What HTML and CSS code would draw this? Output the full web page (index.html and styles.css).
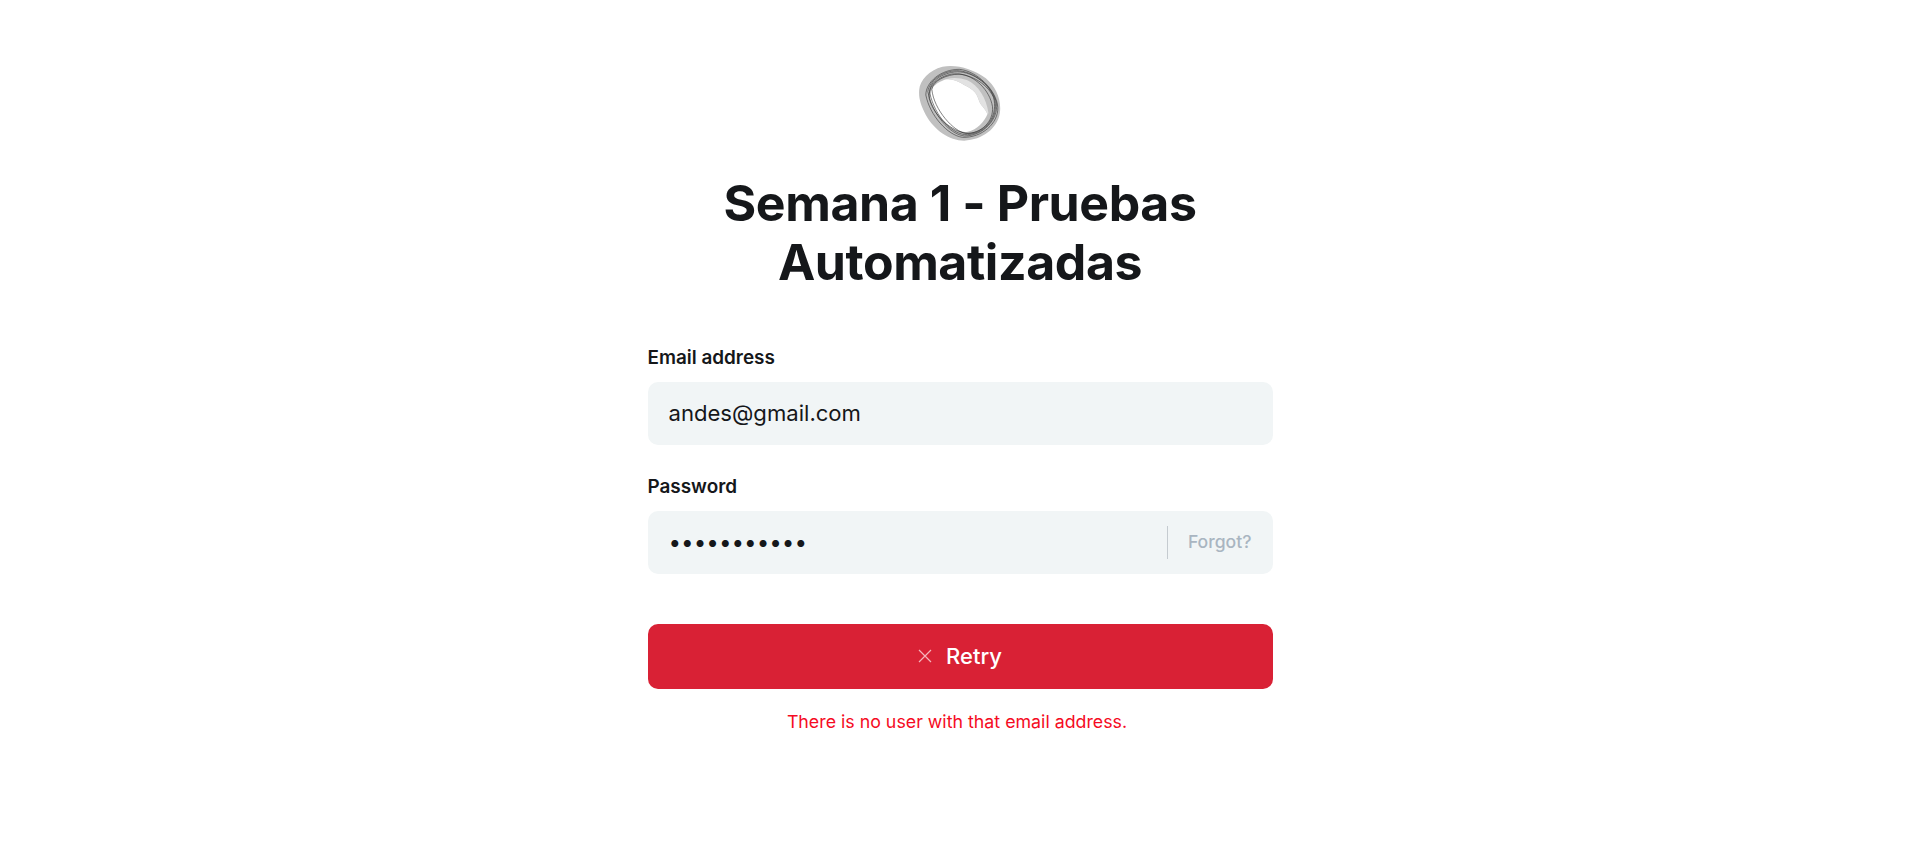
FILE: index.html
```html
<!DOCTYPE html>
<html lang="en">
<head>
<meta charset="utf-8">
<title>Semana 1 - Pruebas Automatizadas</title>
<link rel="stylesheet" href="styles.css">
</head>
<body>
<main class="page">
  <svg class="logo" viewBox="60 45 245 231" width="82" height="77" aria-hidden="true">
    <path class="logo-fill" fill-rule="evenodd" d="M60 120C62 90 90 60 130 50C170 42 220 55 260 85C290 110 308 150 302 190C295 235 250 270 195 272C150 272 105 240 80 195C65 165 58 145 60 120ZM130 92C115 98 100 108 95 125C88 150 100 175 120 200C140 225 175 250 205 245C235 240 255 215 265 192C258 175 242 165 238 148C232 125 215 115 195 105C175 92 150 82 130 92Z"/>
    <path class="logo-light" d="M122 95C145 82 175 80 203 90C238 105 262 145 268 190L265 192C258 175 242 165 238 148C232 125 215 115 195 105C175 92 150 82 130 92Z"/>
    <g class="logo-lines">
      <path d="M92 130C88 98 122 72 165 66C215 60 272 100 287 150C298 200 262 250 205 254C160 256 108 200 92 130Z"/>
      <path d="M86 125C90 92 128 64 172 62C222 62 282 108 292 160C298 208 252 258 196 258C152 254 100 192 86 125Z"/>
      <path d="M98 118C102 92 140 74 180 72C226 76 272 120 280 170C284 215 245 252 200 250C165 246 104 180 98 118Z"/>
      <path d="M80 135C80 96 125 58 180 58C232 62 292 120 296 172C298 220 248 264 190 262C145 256 92 196 80 135Z"/>
      <path d="M90 145C86 105 118 80 158 72C205 68 262 96 283 142C296 190 270 240 215 250C170 254 106 205 90 145Z"/>
    </g>
  </svg>
  <h1 class="title">Semana 1 - Pruebas Automatizadas</h1>
  <form class="form">
    <div class="field">
      <label class="label" for="email">Email address</label>
      <div class="control">
        <input class="input" id="email" type="email" value="andes@gmail.com">
      </div>
    </div>
    <div class="field">
      <label class="label" for="password">Password</label>
      <div class="control">
        <input class="input input-password" id="password" type="password" value="12345678901">
        <a class="forgot" href="#">Forgot?</a>
      </div>
    </div>
    <button class="retry" type="button">
      <svg class="retry-icon" viewBox="0 0 14 14" width="14" height="14" aria-hidden="true"><path d="M1 1L13 13M13 1L1 13"/></svg>
      <span>Retry</span>
    </button>
    <p class="error">There is no user with that email address.</p>
  </form>
</main>
</body>
</html>
```

FILE: styles.css
```css
* {
  box-sizing: border-box;
}

html, body {
  margin: 0;
  background: #fff;
}

body {
  font-family: Inter, "Noto Sans", sans-serif;
  color: #15171a;
}

.page {
  display: flex;
  flex-direction: column;
  align-items: center;
  padding-top: 65px;
}

.logo {
  display: block;
  margin-bottom: 32px;
}

.logo-fill {
  fill: #c0c0c0;
}

.logo-light {
  fill: #e2e2e2;
}

.logo-lines path {
  fill: none;
  stroke: #333;
  stroke-width: 3;
  stroke-opacity: 0.6;
}

.title {
  width: 520px;
  margin: 0 0 54px;
  font-size: 50px;
  line-height: 59px;
  font-weight: 700;
  letter-spacing: -0.42px;
  text-align: center;
}

.form {
  width: 625px;
  display: flex;
  flex-direction: column;
}

.field {
  display: flex;
  flex-direction: column;
  gap: 12px;
  margin-bottom: 30px;
}

.label {
  font-size: 18.9px;
  line-height: 24px;
  font-weight: 600;
}

.control {
  display: flex;
  align-items: center;
  height: 63px;
  border-radius: 10px;
  background: #f1f5f6;
}

.input {
  flex: 1;
  min-width: 0;
  height: 100%;
  padding: 0 21px 2px;
  border: 0;
  outline: 0;
  background: transparent;
  font-family: inherit;
  font-size: 22.1px;
  color: #15171a;
}

.input-password {
  font-size: 22.4px;
}

.forgot {
  height: 33px;
  padding: 0 21px 2px 20px;
  border-left: 1px solid #c5cbd0;
  font-size: 17.6px;
  line-height: 31px;
  font-weight: 500;
  color: #a9b5c1;
  text-decoration: none;
}

.retry {
  display: flex;
  align-items: center;
  justify-content: center;
  gap: 14px;
  height: 65px;
  margin-top: 20px;
  padding: 0 0 2px;
  border: 0;
  border-radius: 10px;
  background: #d92135;
  font-family: inherit;
  font-size: 22px;
  font-weight: 500;
  color: #fff;
}

.retry-icon path {
  fill: none;
  stroke: #f5b5bc;
  stroke-width: 1.2;
}

.error {
  margin: 21px 0 0;
  padding-right: 6px;
  font-size: 17.8px;
  line-height: 24px;
  text-align: center;
  color: #f50b23;
}
```
